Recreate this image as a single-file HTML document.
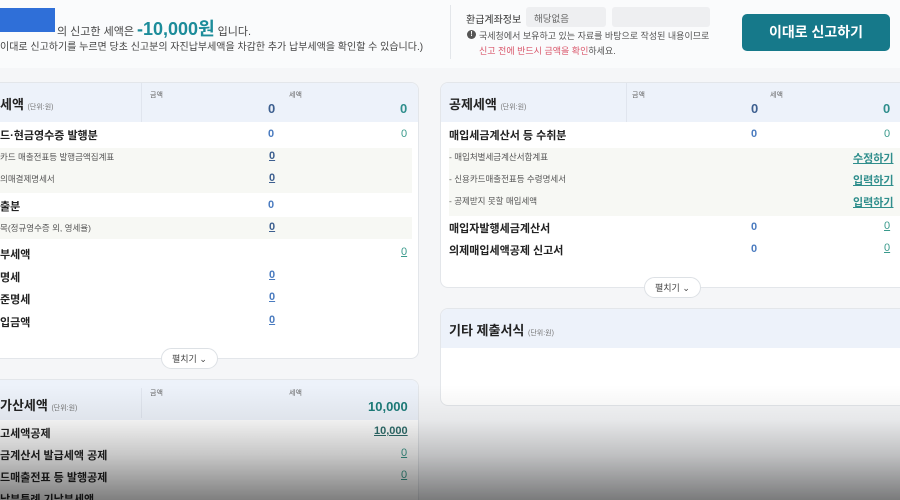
<!DOCTYPE html>
<html style="overflow:hidden;width:900px;height:500px"><head><meta charset="utf-8"><style>
*{margin:0;padding:0;box-sizing:border-box}
body{width:900px;height:500px;overflow:hidden;position:relative;background:#f5f6f8;font-family:"Liberation Sans","Noto Sans CJK KR",sans-serif;color:#222}
.a{position:absolute;white-space:nowrap}
.top{position:absolute;left:0;top:0;width:900px;height:68px;background:#fafbfc}
.card{position:absolute;background:#fff;border:1px solid #e3e6ea;border-radius:8px;overflow:hidden}
.hd{position:absolute;left:0;top:0;right:0;height:39px;background:#edf2fa}
.sub{position:absolute;background:#f7f8f4}
.b{font-size:11px;font-weight:bold;color:#222}
.s{font-size:8.5px;color:#555}
.n{font-size:11px;color:#4a7bbf;font-weight:bold}
.g{font-size:11px;color:#3a9a8c}
.u{text-decoration:underline}
.lk{font-size:11px;color:#2f8e8c;text-decoration:underline;font-weight:bold}
.cap{font-size:7px;color:#666}
.big{font-size:13px;font-weight:bold}
.hn{font-size:13px;font-weight:bold}
.btn{position:absolute;background:#fff;border:1px solid #dde1e5;border-radius:12px;font-size:9px;color:#444;padding:3px 10px}
.ov{position:absolute;left:0;top:0;width:900px;height:500px;background:linear-gradient(to bottom,rgba(0,0,0,0) 0,rgba(0,0,0,0) 385px,rgba(0,0,0,.06) 420px,rgba(0,0,0,.22) 455px,rgba(0,0,0,.5) 500px);pointer-events:none}
</style></head><body>
<div class="top"></div>
<div class="a" style="left:0;top:8px;width:55px;height:24px;background:#2f6fd8"></div>
<div class="a" style="left:57px;top:15px;font-size:11px;color:#444">의 신고한 세액은 <b style="font-size:18px;color:#1c8c9a">-10,000원</b> 입니다.</div>
<div class="a" style="left:0;top:38px;font-size:10px;color:#444">이대로 신고하기를 누르면 당초 신고분의 자진납부세액을 차감한 추가 납부세액을 확인할 수 있습니다.)</div>
<div class="a" style="left:450px;top:5px;width:1px;height:54px;background:#e3e6ea"></div>
<div class="a" style="left:466px;top:11px;font-size:10px;color:#333">환급계좌정보</div>
<div class="a" style="left:526px;top:7px;width:80px;height:20px;background:#eeeff1;border-radius:3px;font-size:9.5px;color:#666;padding:4px 8px">해당없음</div>
<div class="a" style="left:612px;top:7px;width:98px;height:20px;background:#eeeff1;border-radius:3px"></div>
<div class="a" style="left:467px;top:30px;width:9px;height:9px;border-radius:50%;background:#555;color:#fff;font-size:7px;text-align:center;line-height:9px;font-weight:bold">!</div>
<div class="a" style="left:479px;top:29px;font-size:9px;color:#555">국세청에서 보유하고 있는 자료를 바탕으로 작성된 내용이므로</div>
<div class="a" style="left:479px;top:44px;font-size:9px;color:#555"><span style="color:#d9566a">신고 전에 반드시 금액을 확인</span>하세요.</div>
<div class="a" style="left:742px;top:14px;width:148px;height:37px;background:#16798a;border-radius:5px;color:#fff;font-size:14px;font-weight:bold;text-align:center;line-height:37px">이대로 신고하기</div>

<!-- left card 1 -->
<div class="card" style="left:-10px;top:82px;width:429px;height:277px">
<div class="hd"></div>
<div class="a" style="left:150px;top:0;width:1px;height:39px;background:#e0e5ee"></div>
<div class="sub" style="left:0;top:65px;width:421px;height:45px"></div>
<div class="sub" style="left:0;top:134px;width:421px;height:22px"></div>
</div>
<div class="a big" style="left:0;top:94px">세액 <span style="font-size:7px;color:#777;font-weight:normal">(단위:원)</span></div>
<div class="a cap" style="left:150px;top:90px">금액</div><div class="a cap" style="left:289px;top:90px">세액</div>
<div class="a hn" style="left:268px;top:101px;color:#3d5f8f">0</div><div class="a hn" style="left:400px;top:101px;color:#2f8e8c">0</div>
<div class="a b" style="left:0;top:127px">드·현금영수증 발행분</div><div class="a n" style="left:268px;top:128px">0</div><div class="a g" style="left:401px;top:128px">0</div>
<div class="a s" style="left:0;top:151px">카드 매출전표등 발행금액집계표</div><div class="a n u" style="left:269px;top:150px;color:#3d5f8f">0</div>
<div class="a s" style="left:0;top:173px">의매결제명세서</div><div class="a n u" style="left:269px;top:172px;color:#3d5f8f">0</div>
<div class="a b" style="left:0;top:198px">출분</div><div class="a n" style="left:268px;top:199px">0</div>
<div class="a s" style="left:0;top:222px">목(정규영수증 외, 영세율)</div><div class="a n u" style="left:269px;top:221px;color:#3d5f8f">0</div>
<div class="a b" style="left:0;top:246px">부세액</div><div class="a g u" style="left:401px;top:246px">0</div>
<div class="a b" style="left:0;top:269px">명세</div><div class="a n u" style="left:269px;top:269px">0</div>
<div class="a b" style="left:0;top:291px">준명세</div><div class="a n u" style="left:269px;top:291px">0</div>
<div class="a b" style="left:0;top:314px">입금액</div><div class="a n u" style="left:269px;top:314px">0</div>
<div class="btn" style="left:161px;top:348px">펼치기 ⌄</div>

<!-- left card 2 -->
<div class="card" style="left:-10px;top:379px;width:429px;height:140px">
<div class="hd" style="height:40px"></div>
<div class="a" style="left:150px;top:8px;width:1px;height:30px;background:#e0e5ee"></div>
</div>
<div class="a big" style="left:0;top:395px">가산세액 <span style="font-size:7px;color:#777;font-weight:normal">(단위:원)</span></div>
<div class="a cap" style="left:150px;top:388px">금액</div><div class="a cap" style="left:289px;top:388px">세액</div>
<div class="a" style="left:368px;top:399px;font-size:13px;font-weight:bold;color:#1c7d7a">10,000</div>
<div class="a b" style="left:0;top:425px">고세액공제</div><div class="a lk" style="left:374px;top:425px;color:#2f6e6c">10,000</div>
<div class="a b" style="left:0;top:447px">금계산서 발급세액 공제</div><div class="a g u" style="left:401px;top:447px">0</div>
<div class="a b" style="left:0;top:469px">드매출전표 등 발행공제</div><div class="a g u" style="left:401px;top:469px">0</div>
<div class="a b" style="left:0;top:491px">납부특례 기납부세액</div>

<!-- right card 1 -->
<div class="card" style="left:440px;top:82px;width:470px;height:206px">
<div class="hd"></div>
<div class="a" style="left:185px;top:0;width:1px;height:39px;background:#e0e5ee"></div>
<div class="sub" style="left:8px;top:65px;width:460px;height:68px"></div>
</div>
<div class="a big" style="left:449px;top:94px">공제세액 <span style="font-size:7px;color:#777;font-weight:normal">(단위:원)</span></div>
<div class="a cap" style="left:632px;top:90px">금액</div><div class="a cap" style="left:770px;top:90px">세액</div>
<div class="a hn" style="left:751px;top:101px;color:#3d5f8f">0</div><div class="a hn" style="left:883px;top:101px;color:#2f8e8c">0</div>
<div class="a b" style="left:449px;top:127px">매입세금계산서 등 수취분</div><div class="a n" style="left:751px;top:128px">0</div><div class="a g" style="left:884px;top:128px">0</div>
<div class="a s" style="left:449px;top:151px">- 매입처별세금계산서합계표</div><div class="a lk" style="left:853px;top:150px">수정하기</div>
<div class="a s" style="left:449px;top:173px">- 신용카드매출전표등 수령명세서</div><div class="a lk" style="left:853px;top:172px">입력하기</div>
<div class="a s" style="left:449px;top:195px">- 공제받지 못할 매입세액</div><div class="a lk" style="left:853px;top:194px">입력하기</div>
<div class="a b" style="left:449px;top:220px">매입자발행세금계산서</div><div class="a n" style="left:751px;top:221px">0</div><div class="a g u" style="left:884px;top:220px">0</div>
<div class="a b" style="left:449px;top:242px">의제매입세액공제 신고서</div><div class="a n" style="left:751px;top:243px">0</div><div class="a g u" style="left:884px;top:242px">0</div>
<div class="btn" style="left:644px;top:277px">펼치기 ⌄</div>

<!-- right card 2 -->
<div class="card" style="left:440px;top:308px;width:470px;height:98px">
<div class="hd"></div>
</div>
<div class="a big" style="left:449px;top:320px">기타 제출서식 <span style="font-size:7px;color:#777;font-weight:normal">(단위:원)</span></div>

<div class="ov"></div>
</body></html>
